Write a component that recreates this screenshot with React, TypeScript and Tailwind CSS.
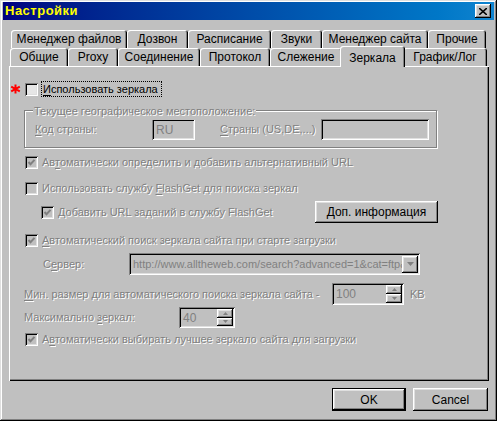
import React from "react";

const raised =
  "shadow-[inset_-1px_-1px_#000,inset_1px_1px_#fff,inset_-2px_-2px_#808080,inset_2px_2px_#dfdfdf]";
const sunken =
  "shadow-[inset_1px_1px_#808080,inset_-1px_-1px_#fff,inset_2px_2px_#000,inset_-2px_-2px_#dfdfdf]";
const dis = "text-[#808080] [text-shadow:1px_1px_0_#fff]";

// label with an accelerator letter underlined
function Lbl({ text, at }: { text: string; at?: number }) {
  if (at === undefined) return <>{text}</>;
  return (
    <>
      {text.slice(0, at)}
      <span className="underline underline-offset-2">{text[at]}</span>
      {text.slice(at + 1)}
    </>
  );
}

function Check({ checked, enabled }: { checked?: boolean; enabled?: boolean }) {
  return (
    <div
      className={`w-[13px] h-[13px] shrink-0 flex items-center justify-center ${sunken} ${
        enabled ? "bg-[#e6e6e6]" : "bg-[#c0c0c0]"
      }`}
    >
      {checked && (
        <svg width="9" height="9" viewBox="0 0 9 9">
          <polyline points="1.5,4 3.5,6.2 7.5,1.8" fill="none" stroke="#808080" strokeWidth="2" />
        </svg>
      )}
    </div>
  );
}

function Tab({ label, w, selected }: { label: string; w: string; selected?: boolean }) {
  if (selected) {
    return (
      <div
        className={`${w} h-[21px] -mx-[2px] -mb-px relative z-10 bg-[#c0c0c0] rounded-t-[3px] flex items-start pt-[3px] justify-center text-[12px] shadow-[inset_1px_1px_#fff,inset_-1px_0_#000,inset_-2px_0_#808080]`}
      >
        {label}
      </div>
    );
  }
  return (
    <div
      className={`${w} h-[18px] shrink-0 bg-[#c0c0c0] rounded-t-[3px] flex items-center justify-center text-[12px] shadow-[inset_1px_1px_#fff,inset_-1px_0_#000,inset_-2px_0_#808080]`}
    >
      {label}
    </div>
  );
}

function Arrow({ up, size = 3 }: { up?: boolean; size?: number }) {
  const w = size * 2 + 1;
  return (
    <svg width={w} height={size + 1} viewBox={`0 0 ${w} ${size + 1}`}>
      <polygon
        points={up ? `${size + 0.5},0 ${w},${size + 1} 0,${size + 1}` : `0,0 ${w},0 ${size + 0.5},${size + 1}`}
        fill="#808080"
      />
    </svg>
  );
}

function Spin({ value, w, h }: { value: string; w: string; h: string }) {
  return (
    <div className={`${w} ${h} ${sunken} bg-[#c0c0c0] flex items-stretch p-[2px]`}>
      <div className="flex-1 flex items-center pl-[2px] text-[12px] text-[#808080]">{value}</div>
      <div className="w-[16px] flex flex-col">
        <div className={`flex-1 ${raised} flex items-center justify-center`}>
          <Arrow up size={2} />
        </div>
        <div className={`flex-1 ${raised} flex items-center justify-center`}>
          <Arrow size={2} />
        </div>
      </div>
    </div>
  );
}

export default function App() {
  return (
    <div className="w-[497px] h-[421px] bg-[#c0c0c0] flex flex-col p-[3px] pt-[2px] font-['Liberation_Sans',Arial,sans-serif] text-black shadow-[inset_-1px_-1px_#000,inset_1px_1px_#dfdfdf,inset_-2px_-2px_#808080,inset_2px_2px_#fff] overflow-hidden">
      {/* Title bar */}
      <div className="h-[18px] flex items-center bg-gradient-to-r from-[#000080] to-[#1084d0] pl-[2px] pr-[3px]">
        <span className="text-[#ffff00] font-bold text-[13px] tracking-[0.5px]">Настройки</span>
        <div className={`ml-auto w-[16px] h-[14px] bg-[#c0c0c0] ${raised} flex items-center justify-center`}>
          <svg width="8" height="7" viewBox="0 0 8 7">
            <path d="M0 0 L8 7 M8 0 L0 7" stroke="#000" strokeWidth="1.6" />
          </svg>
        </div>
      </div>

      {/* Tabs */}
      <div className="mt-[10px] flex pl-[8px]">
        <Tab label="Менеджер файлов" w="w-[116px]" />
        <Tab label="Дозвон" w="w-[61px]" />
        <Tab label="Расписание" w="w-[83px]" />
        <Tab label="Звуки" w="w-[51px]" />
        <Tab label="Менеджер сайта" w="w-[106px]" />
        <Tab label="Прочие" w="w-[58px]" />
      </div>
      <div className="flex items-end h-[18px] pl-[7px]">
        <Tab label="Общие" w="w-[58px]" />
        <Tab label="Proxy" w="w-[50px]" />
        <Tab label="Соединение" w="w-[82px]" />
        <Tab label="Протокол" w="w-[70px]" />
        <Tab label="Слежение" w="w-[72px]" />
        <Tab label="Зеркала" w="w-[65px]" selected />
        <Tab label="График/Лог" w="w-[84px]" />
      </div>

      {/* Panel */}
      <div className="ml-[6px] w-[480px] h-[315px] shrink-0 flex flex-col text-[11px] shadow-[inset_1px_1px_#fff,inset_-1px_-1px_#000,inset_-2px_-2px_#808080]">
        <div className="mt-[15px] h-[16px] flex items-center">
          <svg className="ml-[1px]" width="11" height="10" viewBox="0 0 11 10">
            <path d="M5.5 0.5 V9.5 M1.2 2.6 L9.8 7.4 M1.2 7.4 L9.8 2.6" stroke="#ff0000" strokeWidth="2" />
          </svg>
          <div className="ml-[4px]">
            <Check enabled />
          </div>
          <div className="ml-[3px] h-[16px] w-[121px] border border-dotted border-black flex items-center pl-[1px]">
            <Lbl text="Использовать зеркала" at={0} />
          </div>
        </div>

        {/* Group box */}
        <div className="relative mt-[13px] ml-[15px] w-[413px] h-[38px] border border-[#808080] shadow-[inset_1px_1px_#fff,1px_1px_#fff]">
          <span className={`absolute left-[8px] -top-[8px] px-[1px] bg-[#c0c0c0] ${dis}`}>
            Текущее географическое местоположение:
          </span>
          <div className="mt-[8px] flex items-center">
            <span className={`ml-[10px] w-[117px] ${dis}`}>
              <Lbl text="Код страны:" at={0} />
            </span>
            <div className={`w-[43px] h-[21px] ${sunken} flex items-center pl-[4px] text-[12px] text-[#808080]`}>RU</div>
            <span className={`ml-[25px] w-[101px] ${dis}`}>
              <Lbl text="Страны (US,DE,...)" at={0} />
            </span>
            <div className={`w-[108px] h-[21px] ${sunken}`} />
          </div>
        </div>

        <div className="mt-[8px] h-[13px] flex items-center">
          <div className="ml-[16px]">
            <Check checked />
          </div>
          <span className={`ml-[4px] ${dis}`}>
            <Lbl text="Автоматически определить и добавить альтернативный URL" at={2} />
          </span>
        </div>

        <div className="mt-[13px] h-[13px] flex items-center">
          <div className="ml-[16px]">
            <Check />
          </div>
          <span className={`ml-[4px] ${dis}`}>
            <Lbl text="Использовать службу FlashGet для поиска зеркал" at={20} />
          </span>
        </div>

        <div className="mt-[6px] h-[22px] flex items-center">
          <div className="ml-[32px] w-[274px] flex items-center">
            <Check checked />
            <span className={`ml-[4px] ${dis}`}>Добавить URL заданий в службу FlashGet</span>
          </div>
          <div className={`w-[123px] h-[22px] ${raised} flex items-center justify-center text-[12px]`}>
            Доп. информация
          </div>
        </div>

        <div className="mt-[11px] h-[13px] flex items-center">
          <div className="ml-[16px]">
            <Check checked />
          </div>
          <span className={`ml-[4px] ${dis}`}>
            <Lbl text="Автоматический поиск зеркала сайта при старте загрузки" at={0} />
          </span>
        </div>

        <div className="mt-[6px] h-[22px] flex items-center">
          <span className={`ml-[34px] w-[86px] ${dis}`}>
            <Lbl text="Сервер:" at={1} />
          </span>
          <div className={`w-[291px] h-[22px] ${sunken} flex items-center p-[2px]`}>
            <div className="flex-1 overflow-hidden whitespace-nowrap pl-[2px] text-[11px] text-[#808080]">
              http://www.alltheweb.com/search?advanced=1&amp;cat=ftp&amp;
            </div>
            <div className={`w-[16px] h-[17px] shrink-0 ${raised} flex items-center justify-center`}>
              <Arrow />
            </div>
          </div>
        </div>

        <div className="mt-[8px] h-[22px] flex items-center">
          <span className={`ml-[15px] w-[308px] ${dis}`}>
            <Lbl text="Мин. размер для автоматического поиска зеркала сайта -" at={0} />
          </span>
          <Spin value="100" w="w-[72px]" h="h-[22px]" />
          <span className={`ml-[6px] ${dis}`}>KB</span>
        </div>

        <div className="mt-[2px] h-[21px] flex items-center">
          <span className={`ml-[15px] w-[155px] ${dis}`}>
            <Lbl text="Максимально зеркал:" at={12} />
          </span>
          <Spin value="40" w="w-[56px]" h="h-[21px]" />
        </div>

        <div className="mt-[5px] h-[13px] flex items-center">
          <div className="ml-[16px]">
            <Check checked />
          </div>
          <span className={`ml-[4px] ${dis}`}>
            <Lbl text="Автоматически выбирать лучшее зеркало сайта для загрузки" at={1} />
          </span>
        </div>
      </div>

      {/* Buttons */}
      <div className="mt-[7px] flex justify-end gap-[7px] mr-[6px] text-[12px]">
        <div className="w-[74px] h-[23px] bg-[#c0c0c0] flex items-center justify-center shadow-[inset_0_0_0_1px_#000,inset_-2px_-2px_#000,inset_2px_2px_#fff,inset_-3px_-3px_#808080,inset_3px_3px_#dfdfdf]">
          OK
        </div>
        <div className={`w-[75px] h-[23px] ${raised} flex items-center justify-center`}>Cancel</div>
      </div>
    </div>
  );
}
